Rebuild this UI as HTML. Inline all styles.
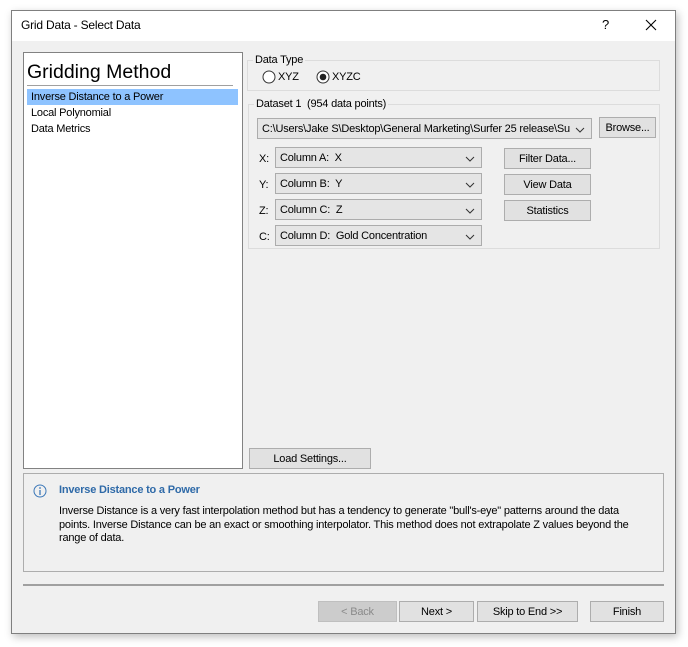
<!DOCTYPE html>
<html><head><style>
*{box-sizing:border-box;margin:0;padding:0}
body{width:688px;height:647px;background:#fff;font-family:"Liberation Sans",sans-serif;font-size:11px;color:#000;position:relative;overflow:hidden;letter-spacing:-0.2px}
.a{position:absolute}
.win{left:11px;top:10px;width:665px;height:624px;border:1px solid #7f7f7f;background:#f0f0f0;box-shadow:2px 3px 8px rgba(0,0,0,.25)}
.tb{left:12px;top:11px;width:663px;height:30px;background:#fff}
.grp{border:1px solid #dcdcdc}
.lbl{background:#f0f0f0;padding:0 2px}
.cb{background:#e5e5e5;border:1px solid #acacac;padding:4px 0 0 4px;height:21px;white-space:nowrap;overflow:hidden}
.cb svg{position:absolute;right:6px;top:8px}
.bt{background:#e1e1e1;border:1px solid #adadad;text-align:center;height:21px;padding-top:4px}
</style></head><body>
<div class="a win"></div>
<div class="a tb"></div>
<div class="a" style="left:21px;top:18px;font-size:12px">Grid Data - Select Data</div>
<div class="a" style="left:602px;top:17px;font-size:13px">?</div>
<svg class="a" style="left:645px;top:19px" width="12" height="12"><path d="M1 1L11 11M11 1L1 11" stroke="#000" stroke-width="1.1"/></svg>

<div class="a" style="left:23px;top:52px;width:220px;height:417px;background:#fff;border:1px solid #828282"></div>
<div class="a" style="left:27px;top:61px;font-size:19.5px;letter-spacing:0">Gridding Method</div>
<div class="a" style="left:27px;top:85px;width:206px;height:1px;background:#a0a0a0"></div>
<div class="a" style="left:27px;top:89px;width:211px;height:16px;background:#8ec3ff"></div>
<div class="a" style="left:31px;top:91px">Inverse Distance to a Power</div>
<div class="a" style="left:31px;top:107px">Local Polynomial</div>
<div class="a" style="left:31px;top:123px">Data Metrics</div>

<div class="a grp" style="left:247px;top:60px;width:413px;height:31px"></div>
<div class="a lbl" style="left:253px;top:54px">Data Type</div>
<svg class="a" style="left:262px;top:70px" width="14" height="14"><circle cx="7" cy="7" r="6" fill="#fff" stroke="#333"/></svg>
<div class="a" style="left:278px;top:71px">XYZ</div>
<svg class="a" style="left:316px;top:70px" width="14" height="14"><circle cx="7" cy="7" r="6" fill="#fff" stroke="#333"/><circle cx="7" cy="7" r="3.3" fill="#222"/></svg>
<div class="a" style="left:332px;top:71px">XYZC</div>

<div class="a grp" style="left:248px;top:104px;width:412px;height:145px"></div>
<div class="a lbl" style="left:254px;top:98px">Dataset 1 &nbsp;(954 data points)</div>
<div class="a cb" style="left:257px;top:118px;width:335px;padding-right:24px">C:\Users\Jake S\Desktop\General Marketing\Surfer 25 release\Su<svg width="10" height="6"><path d="M1 1l4 4 4-4" fill="none" stroke="#333"/></svg></div>
<div class="a bt" style="left:599px;top:117px;width:57px">Browse...</div>

<div class="a" style="left:259px;top:153px">X:</div>
<div class="a" style="left:259px;top:179px">Y:</div>
<div class="a" style="left:259px;top:205px">Z:</div>
<div class="a" style="left:259px;top:231px">C:</div>
<div class="a cb" style="left:275px;top:147px;width:207px">Column A:&nbsp; X<svg width="10" height="6"><path d="M1 1l4 4 4-4" fill="none" stroke="#333"/></svg></div>
<div class="a cb" style="left:275px;top:173px;width:207px">Column B:&nbsp; Y<svg width="10" height="6"><path d="M1 1l4 4 4-4" fill="none" stroke="#333"/></svg></div>
<div class="a cb" style="left:275px;top:199px;width:207px">Column C:&nbsp; Z<svg width="10" height="6"><path d="M1 1l4 4 4-4" fill="none" stroke="#333"/></svg></div>
<div class="a cb" style="left:275px;top:225px;width:207px">Column D:&nbsp; Gold Concentration<svg width="10" height="6"><path d="M1 1l4 4 4-4" fill="none" stroke="#333"/></svg></div>
<div class="a bt" style="left:504px;top:148px;width:87px">Filter Data...</div>
<div class="a bt" style="left:504px;top:174px;width:87px">View Data</div>
<div class="a bt" style="left:504px;top:200px;width:87px">Statistics</div>

<div class="a bt" style="left:249px;top:448px;width:122px">Load Settings...</div>

<div class="a" style="left:23px;top:473px;width:641px;height:99px;border:1px solid #adadad"></div>
<svg class="a" style="left:33px;top:484px" width="14" height="14"><circle cx="7" cy="7" r="6" fill="none" stroke="#3c78b8"/><path d="M7 6v5" stroke="#3c78b8" stroke-width="1.3"/><circle cx="7" cy="4" r=".9" fill="#3c78b8"/></svg>
<div class="a" style="left:59px;top:484px;font-weight:bold;color:#2f6aa8">Inverse Distance to a Power</div>
<div class="a" style="left:59px;top:505px;width:588px;line-height:13.5px">Inverse Distance is a very fast interpolation method but has a tendency to generate "bull's-eye" patterns around the data points. Inverse Distance can be an exact or smoothing interpolator. This method does not extrapolate Z values beyond the range of data.</div>

<div class="a" style="left:23px;top:584px;width:641px;height:2px;background:#a0a0a0"></div>

<div class="a bt" style="left:318px;top:601px;width:79px;color:#8a8a8a;background:#ccc;border-color:#bfbfbf">&lt; Back</div>
<div class="a bt" style="left:399px;top:601px;width:75px">Next &gt;</div>
<div class="a bt" style="left:477px;top:601px;width:101px">Skip to End &gt;&gt;</div>
<div class="a bt" style="left:590px;top:601px;width:74px">Finish</div>
</body></html>
